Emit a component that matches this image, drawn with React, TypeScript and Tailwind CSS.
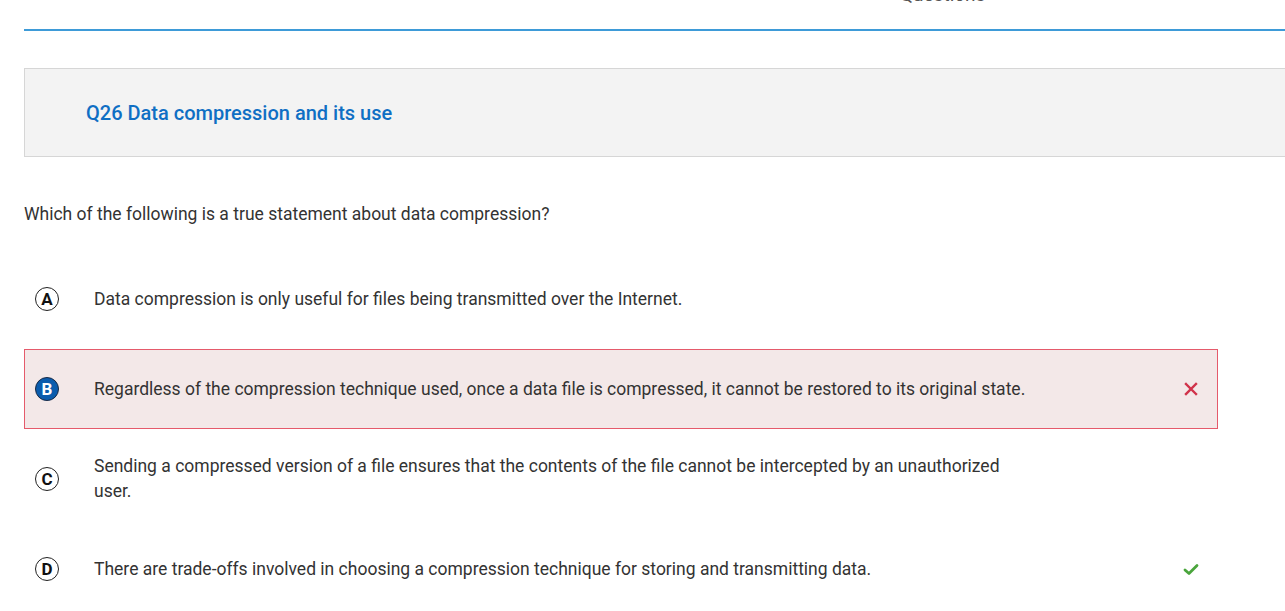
import React from "react";

type Option = {
  letter: string;
  text: string;
  state?: "wrong" | "correct";
  selected?: boolean;
};

const options: Option[] = [
  { letter: "A", text: "Data compression is only useful for files being transmitted over the Internet." },
  {
    letter: "B",
    text: "Regardless of the compression technique used, once a data file is compressed, it cannot be restored to its original state.",
    state: "wrong",
    selected: true,
  },
  {
    letter: "C",
    text: "Sending a compressed version of a file ensures that the contents of the file cannot be intercepted by an unauthorized user.",
  },
  {
    letter: "D",
    text: "There are trade-offs involved in choosing a compression technique for storing and transmitting data.",
    state: "correct",
  },
];

function LetterBadge({ letter, selected }: { letter: string; selected?: boolean }) {
  return (
    <div
      className={
        selected
          ? "flex h-[24px] w-[24px] shrink-0 items-center justify-center rounded-full border-[1.5px] border-[#1a2a44] bg-[#0b5cad] text-[17px] font-bold leading-none text-white"
          : "flex h-[24px] w-[24px] shrink-0 items-center justify-center rounded-full border-[1.5px] border-[#222] bg-white text-[17px] font-bold leading-none text-[#111]"
      }
    >
      {letter}
    </div>
  );
}

function WrongIcon() {
  return (
    <svg width="14" height="14" viewBox="0 0 14 14" className="shrink-0">
      <path d="M2 2 L12 12 M12 2 L2 12" stroke="#d0324a" strokeWidth="2.4" strokeLinecap="square" />
    </svg>
  );
}

function CorrectIcon() {
  return (
    <svg width="16" height="13" viewBox="0 0 16 13" className="shrink-0">
      <path d="M2 7 L6 10.5 L14 2.5" stroke="#4aa53c" strokeWidth="2.8" fill="none" strokeLinecap="round" strokeLinejoin="round" />
    </svg>
  );
}

export default function App() {
  return (
    <div className="h-[611px] w-full overflow-hidden bg-white font-['Roboto',sans-serif] text-[#333]">
      <div className="w-[1300px] pl-[24px]">
        <div className="flex h-[29px] items-start">
          <div className="ml-[876px] -mt-[14px] text-[19px] leading-[17px] text-[#555]">Questions</div>
        </div>
        <div className="h-[2px] w-full bg-[#3e9bd8]" />

        <div className="mt-[37px] flex h-[89px] items-center border border-[#d6d6d6] bg-[#f3f3f3] pl-[61px]">
          <h2 className="text-[20px] font-medium text-[#0f6fc4]">Q26 Data compression and its use</h2>
        </div>

        <p className="mt-[45px] text-[17.5px] leading-[24px] text-[#333]">
          Which of the following is a true statement about data compression?
        </p>

        <div className="mt-[33px] flex w-[1194px] flex-col gap-[10px]">
          {options.map((o) => (
            <div
              key={o.letter}
              className={
                o.state === "wrong"
                  ? "flex h-[80px] items-center border border-[#e55a6b] bg-[#f3e8e8] pl-[10px] pr-[18px]"
                  : "flex h-[80px] items-center border border-transparent pl-[10px] pr-[18px]"
              }
            >
              <LetterBadge letter={o.letter} selected={o.selected} />
              <div className="ml-[35px] w-[940px] text-[17.5px] leading-[25px] text-[#333]">{o.text}</div>
              <div className="ml-auto flex w-[16px] items-center justify-center">
                {o.state === "wrong" && <WrongIcon />}
                {o.state === "correct" && <CorrectIcon />}
              </div>
            </div>
          ))}
        </div>
      </div>
    </div>
  );
}
